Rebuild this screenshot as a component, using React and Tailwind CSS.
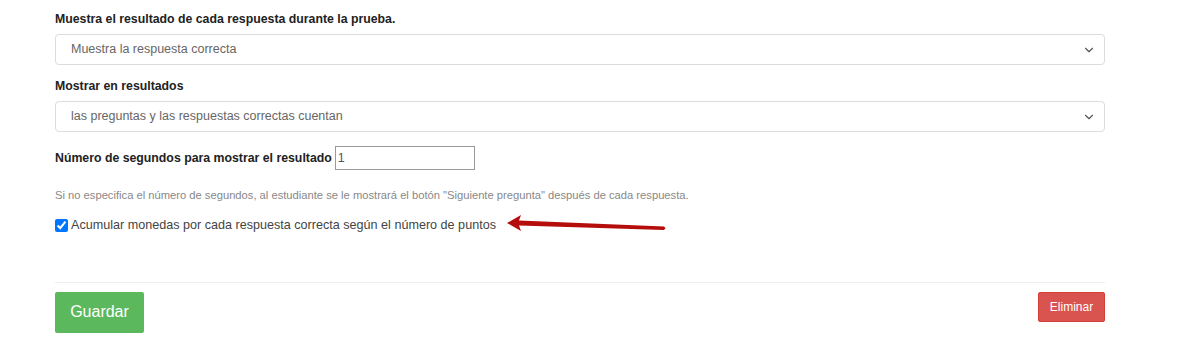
import { ChevronDown } from "lucide-react";

function SelectBox({ value }) {
    return (
        <div className="relative mt-[7px] h-[31px] w-full rounded-[4px] border border-[#dcdcdc] bg-white">
            <div className="flex h-full items-center pl-[15px] text-[12.5px] text-[#666]">
                {value}
            </div>
            <ChevronDown size={14} strokeWidth={2} className="absolute right-[8px] top-[8px] text-[#555]" />
        </div>
    );
}

export default function App() {
    return (
        <div className="relative h-[357px] w-[1200px] bg-white font-['Liberation_Sans',Arial,sans-serif] text-[#333]">
            <div className="ml-[55px] w-[1050px] pt-[12px]">
                {/* Result per answer */}
                <label className="block text-[12.3px] font-bold leading-[15px] text-[#222]">
                    Muestra el resultado de cada respuesta durante la prueba.
                </label>
                <SelectBox value="Muestra la respuesta correcta" />

                {/* Show in results */}
                <label className="mt-[14px] block text-[12.3px] font-bold leading-[15px] text-[#222]">
                    Mostrar en resultados
                </label>
                <SelectBox value="las preguntas y las respuestas correctas cuentan" />

                {/* Seconds */}
                <div className="mt-[14px] flex items-center">
                    <label className="text-[12.3px] font-bold text-[#222]">
                        Número de segundos para mostrar el resultado
                    </label>
                    <input
                        type="text"
                        defaultValue="1"
                        className="ml-[3px] h-[24px] w-[140px] border border-[#999] px-[2px] text-[12.5px] text-[#555] outline-none"
                    />
                </div>

                <p className="mt-[17px] text-[11.2px] text-[#888]">
                    Si no especifica el número de segundos, al estudiante se le mostrará el botón "Siguiente pregunta" después de cada respuesta.
                </p>

                <label className="mt-[12px] flex items-center text-[12.6px] text-[#444]">
                    <input type="checkbox" defaultChecked className="m-0 mr-[3px] h-[13px] w-[13px] accent-[#0075ff]" />
                    Acumular monedas por cada respuesta correcta según el número de puntos
                </label>

                <div className="mt-[47px] border-t border-[#eee]" />

                <div className="mt-[9px] flex items-start justify-between">
                    <button className="h-[41px] w-[89px] rounded-[2px] bg-[#5cb85c] text-[16px] text-white">
                        Guardar
                    </button>
                    <button className="h-[30px] w-[67px] rounded-[2px] border border-[#d43f3a] bg-[#d9534f] text-[12px] text-white">
                        Eliminar
                    </button>
                </div>
            </div>

            {/* Annotation arrow */}
            <svg className="absolute left-[505px] top-[214px]" width="165" height="22" viewBox="0 0 165 22">
                <polygon points="2,9 16,1 14,6.5 159,12.5 160.5,14.2 159,16 14,11.5 16,17" fill="#b50d0b" />
            </svg>
        </div>
    );
}
